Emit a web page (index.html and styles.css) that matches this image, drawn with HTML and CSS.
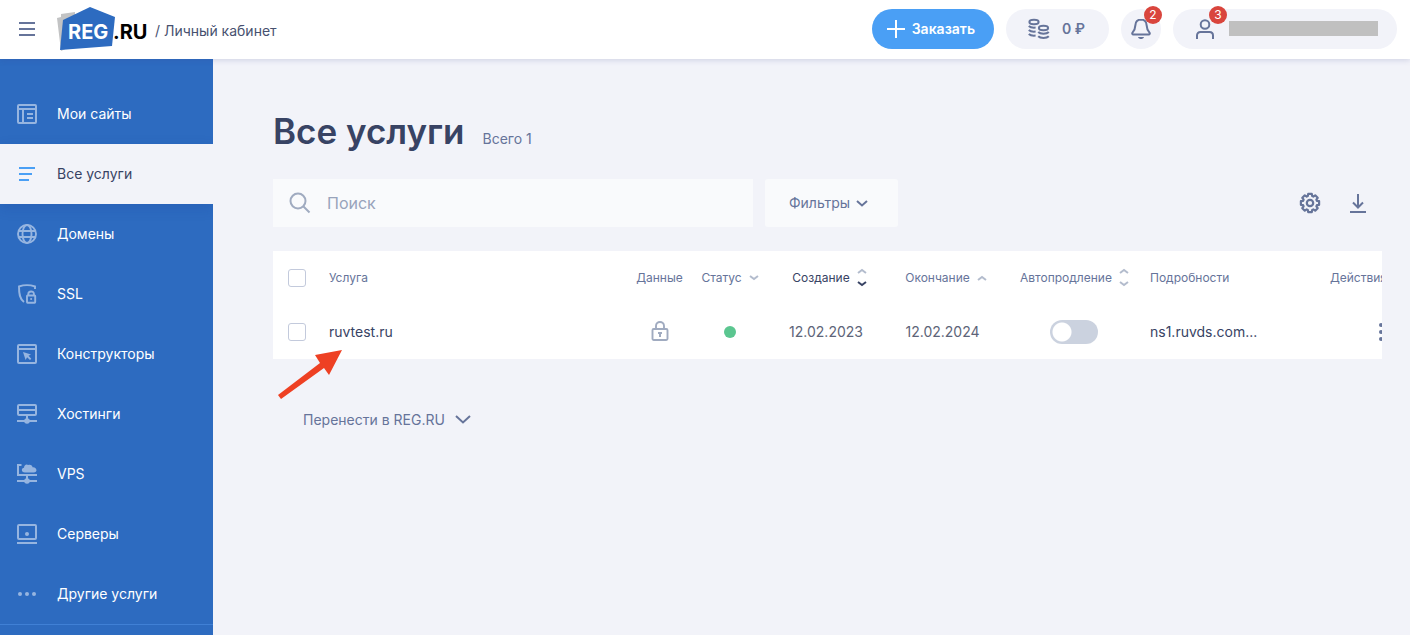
FILE: index.html
```html
<!DOCTYPE html>
<html lang="ru">
<head>
<meta charset="utf-8">
<title>Все услуги — Личный кабинет</title>
<link rel="stylesheet" href="styles.css">
</head>
<body>
<header class="header">
  <button class="icon-button menu-button" type="button" aria-label="Меню">
    <svg width="20" height="20" viewBox="0 0 20 20"><path d="M2 4h16M2 10h16M2 16h16" stroke="currentColor" stroke-width="2"/></svg>
  </button>
  <a class="logo" href="#" aria-label="REG.RU">
    <svg width="94" height="48" viewBox="0 0 94 48">
      <path d="M4 9 18 7 17 40 4 46 0 13 4 12Z" fill="#c2c3c4"/>
      <path d="M6 15 33 2 58 12 55 41 3 45Z" fill="#2d6bc0"/>
      <text x="11" y="34" class="logo-text logo-reg">REG</text>
      <text x="56" y="34" class="logo-text">.RU</text>
    </svg>
  </a>
  <span class="cabinet">/ Личный кабинет</span>
  <div class="header-actions">
    <button class="pill order" type="button">
      <svg width="18" height="18" viewBox="0 0 18 18"><path d="M9 0v18M0 9h18" stroke="currentColor" stroke-width="2"/></svg>
      <span>Заказать</span>
    </button>
    <button class="pill balance" type="button">
      <svg width="22" height="22" viewBox="0 0 22 22" fill="none" stroke="currentColor" stroke-width="2">
        <ellipse cx="6" cy="4" rx="4.600" ry="2.200"/>
        <path d="M.8 8c1.500 1.500 4 1.900 6.800 1.600M.8 12c1.500 1.500 4 1.900 6.800 1.600M.8 16c1.500 1.500 4 1.900 6.800 1.600"/>
        <ellipse cx="15.500" cy="10" rx="4.600" ry="2.200"/>
        <path d="M10.200 14c2.200 2.400 8.400 2.400 10.600 0M10.200 18.200c2.200 2.400 8.400 2.400 10.600 0"/>
      </svg>
      <span>0 ₽</span>
    </button>
    <button class="pill bell" type="button" aria-label="Уведомления: 2">
      <svg width="20" height="22" viewBox="0 0 20 22" fill="none" stroke="currentColor" stroke-width="2">
        <path d="M10 1.500c-3.800 0-5.400 2.600-5.600 5.600-.2 3.700-1 5.500-2.900 7.600-.6.800-.2 1.800.8 1.800h15.400c1 0 1.400-1 .8-1.800-1.900-2.100-2.700-3.900-2.900-7.600-.2-3-1.800-5.600-5.600-5.600Z"/>
        <path d="M7 19c.8 2.800 5.200 2.800 6 0Z" fill="currentColor" stroke="none"/>
      </svg>
      <span class="badge">2</span>
    </button>
    <button class="pill profile" type="button" aria-label="Профиль: 3">
      <span class="profile-icon">
        <svg width="20" height="20" viewBox="0 0 20 20" fill="none" stroke="currentColor" stroke-width="2">
          <circle cx="10" cy="5.500" r="4.300"/><path d="M2 20v-3.500c0-2.200 1.300-3.500 3.500-3.500h9c2.200 0 3.500 1.300 3.500 3.500V20"/>
        </svg>
        <span class="badge">3</span>
      </span>
      <span class="profile-name"></span>
    </button>
  </div>
</header>
<div class="layout">
  <nav class="sidebar">
    <a class="nav-item" href="#">
      <svg width="20" height="20" viewBox="0 0 20 20" fill="none" stroke="currentColor" stroke-width="2"><rect x="1" y="1" width="18" height="18" rx="1"/><path d="M1 5h18M6 5v14M10 10h6M10 14h6"/></svg>
      <span>Мои сайты</span></a>
    <a class="nav-item active" href="#" aria-current="page">
      <svg width="20" height="20" viewBox="0 0 20 20" fill="none" stroke="currentColor" stroke-width="2"><path d="M2 4h16M2 10h13M2 16h10"/></svg>
      <span>Все услуги</span></a>
    <a class="nav-item" href="#">
      <svg width="20" height="20" viewBox="0 0 20 20" fill="none" stroke="currentColor" stroke-width="1.900"><circle cx="10" cy="10" r="9"/><ellipse cx="10" cy="10" rx="4.500" ry="9"/><path d="M2 7h16M2 13h16"/></svg>
      <span>Домены</span></a>
    <a class="nav-item" href="#">
      <svg width="20" height="20" viewBox="0 0 20 20" fill="none" stroke="currentColor" stroke-width="1.900"><path d="M18 5V2.500C12 .5 8 .5 2 2.500c0 7 .5 12.500 5 15.500"/><rect x="10" y="11.500" width="8.200" height="7.200" rx=".6"/><path d="M11.300 11.500V10c0-3.400 5.600-3.400 5.600 0v1.500"/><circle cx="14.100" cy="15" r="1" fill="currentColor" stroke="none"/></svg>
      <span>SSL</span></a>
    <a class="nav-item" href="#">
      <svg width="20" height="20" viewBox="0 0 20 20" fill="none" stroke="currentColor" stroke-width="2"><rect x="1" y="1" width="18" height="18" rx="1"/><path d="M1 5h18"/><path d="m6 8 8 2.500-2.500 1.300 2.800 3-1.300 1.300-2.900-2.800L8.600 16Z" fill="currentColor" stroke="none"/></svg>
      <span>Конструкторы</span></a>
    <a class="nav-item" href="#">
      <svg width="20" height="20" viewBox="0 0 20 20" fill="none" stroke="currentColor" stroke-width="2"><rect x="1" y="1" width="18" height="10" rx="1"/><path d="M1 6h18M10 11v5M0 17h20"/><circle cx="10" cy="17" r="2.800" fill="currentColor" stroke="none"/></svg>
      <span>Хостинги</span></a>
    <a class="nav-item" href="#">
      <svg width="20" height="20" viewBox="0 0 20 20" fill="none" stroke="currentColor" stroke-width="2"><path d="M4.500 1H1v10h19M10 11v5M0 17h20"/><circle cx="10" cy="17" r="2.800" fill="currentColor" stroke="none"/><path d="M8 8.500c-4 0-4-4.500-1-4.800C7 1 9.500-.5 11.200 1c2.200-.9 4.300.6 4.300 2.300 4.500-.5 5.500 5.200 1.300 5.200Z" fill="currentColor" stroke="none"/></svg>
      <span>VPS</span></a>
    <a class="nav-item" href="#">
      <svg width="20" height="20" viewBox="0 0 20 20" fill="none" stroke="currentColor" stroke-width="2"><rect x="1" y="1" width="18" height="14" rx="1"/><path d="M0 19h20"/><circle cx="10" cy="10" r="2" fill="currentColor" stroke="none"/></svg>
      <span>Серверы</span></a>
    <a class="nav-item" href="#">
      <svg width="20" height="20" viewBox="0 0 20 20" fill="currentColor"><circle cx="3" cy="10" r="2"/><circle cx="10" cy="10" r="2"/><circle cx="17" cy="10" r="2"/></svg>
      <span>Другие услуги</span></a>
  </nav>
  <main class="main">
    <div class="title">
      <h1>Все услуги</h1>
      <span>Всего 1</span>
    </div>
    <div class="toolbar">
      <label class="search">
        <svg width="22" height="22" viewBox="0 0 22 22" fill="none" stroke="currentColor" stroke-width="2"><circle cx="9" cy="9" r="7.500"/><path d="m14.500 14.500 6 6"/></svg>
        <input type="text" placeholder="Поиск" aria-label="Поиск">
      </label>
      <button class="filters" type="button"><span>Фильтры</span>
        <svg width="12" height="12" viewBox="0 0 12 12" fill="none" stroke="currentColor" stroke-width="2"><path d="m1 4 5 4.500L11 4"/></svg>
      </button>
      <div class="tools">
        <button class="icon-button" type="button" aria-label="Настройки">
          <svg width="22" height="22" viewBox="0 0 22 22" fill="none" stroke="currentColor" stroke-width="2.200" stroke-linejoin="round"><circle cx="11" cy="11" r="3.200"/><path d="M9.200 1.900h3.600l.4 2.200 1.100.5 1.900-1.300 2.500 2.500-1.300 1.900.5 1.100 2.200.4v3.600l-2.200.4-.5 1.100 1.300 1.900-2.500 2.500-1.900-1.300-1.100.5-.4 2.200H9.200l-.4-2.200-1.100-.5-1.900 1.300-2.500-2.500 1.300-1.900-.5-1.100-2.200-.4V9.200l2.200-.4.500-1.100-1.300-1.900 2.500-2.500 1.900 1.300 1.100-.5Z"/></svg>
        </button>
        <button class="icon-button" type="button" aria-label="Скачать">
          <svg width="22" height="22" viewBox="0 0 22 22" fill="none" stroke="currentColor" stroke-width="2"><path d="M11 2v13M6 10.500l5 5 5-5M3 20h16"/></svg>
        </button>
      </div>
    </div>
    <div class="table-wrap">
      <table class="services">
        <colgroup><col class="c-check"><col><col class="c-data"><col class="c-status"><col class="c-created"><col class="c-ends"><col class="c-renew"><col class="c-details"><col class="c-actions"></colgroup>
        <thead>
          <tr>
            <th><input class="check" type="checkbox" aria-label="Выбрать все"></th>
            <th class="left">Услуга</th>
            <th>Данные</th>
            <th><button class="sort" type="button">Статус
              <svg width="8" height="18" viewBox="0 0 8 18"><path d="m0 7 4 3 4-3"/></svg></button></th>
            <th class="date-head"><button class="sort current" type="button">Создание
              <svg width="8" height="18" viewBox="0 0 8 18"><path d="m0 4 4-3 4 3"/><path class="on" d="m0 13 4 3 4-3"/></svg></button></th>
            <th class="date-head"><button class="sort" type="button">Окончание
              <svg width="8" height="18" viewBox="0 0 8 18"><path d="m0 11 4-3 4 3"/></svg></button></th>
            <th><button class="sort" type="button">Автопродление
              <svg width="8" height="18" viewBox="0 0 8 18"><path d="m0 4 4-3 4 3M0 13l4 3 4-3"/></svg></button></th>
            <th class="left">Подробности</th>
            <th class="right">Действия</th>
          </tr>
        </thead>
        <tbody>
          <tr>
            <td><input class="check" type="checkbox" aria-label="Выбрать ruvtest.ru"></td>
            <td class="left"><a class="link" href="#">ruvtest.ru</a></td>
            <td><svg class="lock" width="18" height="22" viewBox="0 0 18 22" fill="none" stroke="currentColor" stroke-width="1.900"><rect x="1.500" y="8" width="15" height="11" rx="1.200"/><path d="M5 8V5c0-5.300 8-5.300 8 0v3"/><path d="M7 12h4M9 11v5" stroke-width="2"/></svg></td>
            <td><span class="dot"></span></td>
            <td>12.02.2023</td>
            <td>12.02.2024</td>
            <td><input class="toggle" type="checkbox" aria-label="Автопродление"></td>
            <td class="left"><a class="link" href="#">ns1.ruvds.com...</a></td>
            <td class="right"><button class="icon-button more" type="button" aria-label="Действия">
              <svg width="4" height="18" viewBox="0 0 4 18" fill="currentColor"><circle cx="2" cy="2" r="2"/><circle cx="2" cy="9" r="2"/><circle cx="2" cy="16" r="2"/></svg></button></td>
          </tr>
        </tbody>
      </table>
      <svg class="pointer" width="72" height="52" viewBox="0 0 72 52"><path d="M69 1 56 26 51 19 8 50 5 46 47 14 42 6Z" fill="#ee4023"/></svg>
    </div>
    <button class="transfer" type="button"><span>Перенести в REG.RU</span>
      <svg width="16" height="10" viewBox="0 0 16 10" fill="none" stroke="currentColor" stroke-width="2"><path d="m1 1 7 6.500L15 1"/></svg>
    </button>
  </main>
</div>
</body>
</html>
```
FILE: styles.css
```css
* { box-sizing: border-box; }
body {
  margin: 0;
  min-height: 100vh;
  display: flex;
  flex-direction: column;
  background: #f2f3f9;
  color: #384364;
  font: 14px/20px Inter, sans-serif;
}
button, input { font: inherit; color: inherit; }
button { margin: 0; padding: 0; border: 0; background: none; cursor: pointer; }
a { color: inherit; text-decoration: none; }
svg { display: block; flex: none; }

.header {
  position: relative;
  z-index: 1;
  display: flex;
  align-items: center;
  height: 59px;
  padding: 0 13px 2px 17px;
  background: #fff;
  box-shadow: 0 1px 6px rgba(56, 67, 140, .2);
}
.icon-button { color: #66749a; }
.logo { margin-left: 20px; }
.logo-text { font: 700 20px Inter, sans-serif; fill: #000; }
.logo-reg { fill: #fff; }
.cabinet { margin-left: 4px; padding-top: 4px; color: #47516f; }
.header-actions { display: flex; gap: 12px; margin-left: auto; }
.pill {
  position: relative;
  display: flex;
  align-items: center;
  height: 40px;
  border-radius: 20px;
  background: #f2f3f9;
  color: #66749a;
}
.order { gap: 7px; padding: 0 19px 0 15px; background: #4a9ff5; color: #fff; font-weight: 600; }
.balance { gap: 12px; padding: 0 24px 0 22px; font-weight: 600; }
.bell { justify-content: center; width: 40px; }
.profile { gap: 14px; padding: 0 19px 0 22px; }
.profile-icon { position: relative; }
.profile-name { width: 149px; height: 15px; background: #c0c0c0; }
.badge {
  position: absolute;
  top: -3px;
  right: -1px;
  width: 18px;
  height: 18px;
  border-radius: 9px;
  background: #d9453d;
  color: #fff;
  font-size: 12px;
  line-height: 18px;
  font-weight: 400;
  text-align: center;
}
.profile-icon .badge { top: -13px; right: -12px; }

.layout { display: flex; flex: 1; }
.sidebar { flex: none; width: 213px; padding-top: 25px; overflow: hidden; background: #2d6bc0; color: #fff; }
.nav-item { display: flex; align-items: center; gap: 20px; height: 60px; padding-left: 17px; }
.nav-item svg { color: #96b5e0; }
.nav-item.active { background: #f2f3f9; color: #384364; box-shadow: 0 4px 12px rgba(20, 60, 150, .2); }
.nav-item.active svg { color: #4a9ff5; }
.nav-item:last-child { height: 61px; border-bottom: 1px solid #4080d5; }

.main { flex: 1; min-width: 0; padding: 48px 28px 48px 60px; }
.title { display: flex; align-items: baseline; gap: 18px; color: #66749a; }
h1 { margin: 0; color: #384364; font-size: 35px; line-height: 48px; font-weight: 600; }
.toolbar { display: flex; gap: 12px; margin-top: 24px; }
.search {
  display: flex;
  align-items: center;
  gap: 16px;
  width: 480px;
  height: 48px;
  padding: 0 16px;
  background: #f9fafc;
  color: #a0abc0;
}
.search input { flex: 1; min-width: 0; padding: 0; border: 0; outline: 0; background: none; color: #384364; font-size: 16px; }
.search input::placeholder { color: #98a3bb; opacity: 1; }
.filters { display: flex; align-items: center; gap: 6px; padding: 0 30px 0 24px; border-radius: 3px; background: #f9fafc; color: #66749a; }
.tools { display: flex; gap: 26px; margin-left: auto; padding-right: 13px; }

.table-wrap { position: relative; margin-top: 24px; background: #fff; overflow-x: clip; }
.services { width: 100%; min-width: 1114px; table-layout: fixed; border-collapse: collapse; }
.c-check { width: 56px; }
.c-data { width: 69px; }
.c-status { width: 71px; }
.c-created { width: 122px; }
.c-ends { width: 111px; }
.c-renew { width: 152px; }
.c-details { width: 150px; }
.c-actions { width: 87px; }
th, td { height: 54px; padding: 0; text-align: center; vertical-align: middle; white-space: nowrap; }
th { color: #66749a; font-size: 12px; font-weight: 400; }
td { color: #5d6478; }
.date-head { padding-left: 6px; }
.left { text-align: left; }
.right { text-align: right; }
.link { color: #384364; }
.check {
  display: block;
  appearance: none;
  width: 18px;
  height: 18px;
  margin: 0 0 0 15px;
  border: 1px solid #c3cadc;
  border-radius: 3px;
  background: #fff;
}
.check:checked { background: #4a9ff5; }
.sort { display: inline-flex; align-items: center; gap: 8px; vertical-align: middle; }
.sort svg { fill: none; stroke: #b3bccd; stroke-width: 2; overflow: visible; }
.sort.current { color: #384364; }
.sort .on { stroke: #384364; }
.lock { margin: 0 auto; color: #a0abc0; }
.dot { display: block; width: 12px; height: 12px; margin: 0 auto; border-radius: 6px; background: #5bc690; }
.toggle {
  display: block;
  appearance: none;
  width: 48px;
  height: 24px;
  margin: 0 auto;
  border-radius: 12px;
  background: radial-gradient(circle at 12px 12px, #fff 9px, #cbd2df 10px);
}
.toggle:checked { background: radial-gradient(circle at 36px 12px, #fff 9px, #4a9ff5 10px); }
.more { display: block; margin-left: auto; padding-right: 4px; }
.pointer { position: absolute; left: 0; top: 98px; pointer-events: none; }
.transfer { display: flex; align-items: center; gap: 10px; margin: 51px 0 0 30px; color: #66749a; }
```
